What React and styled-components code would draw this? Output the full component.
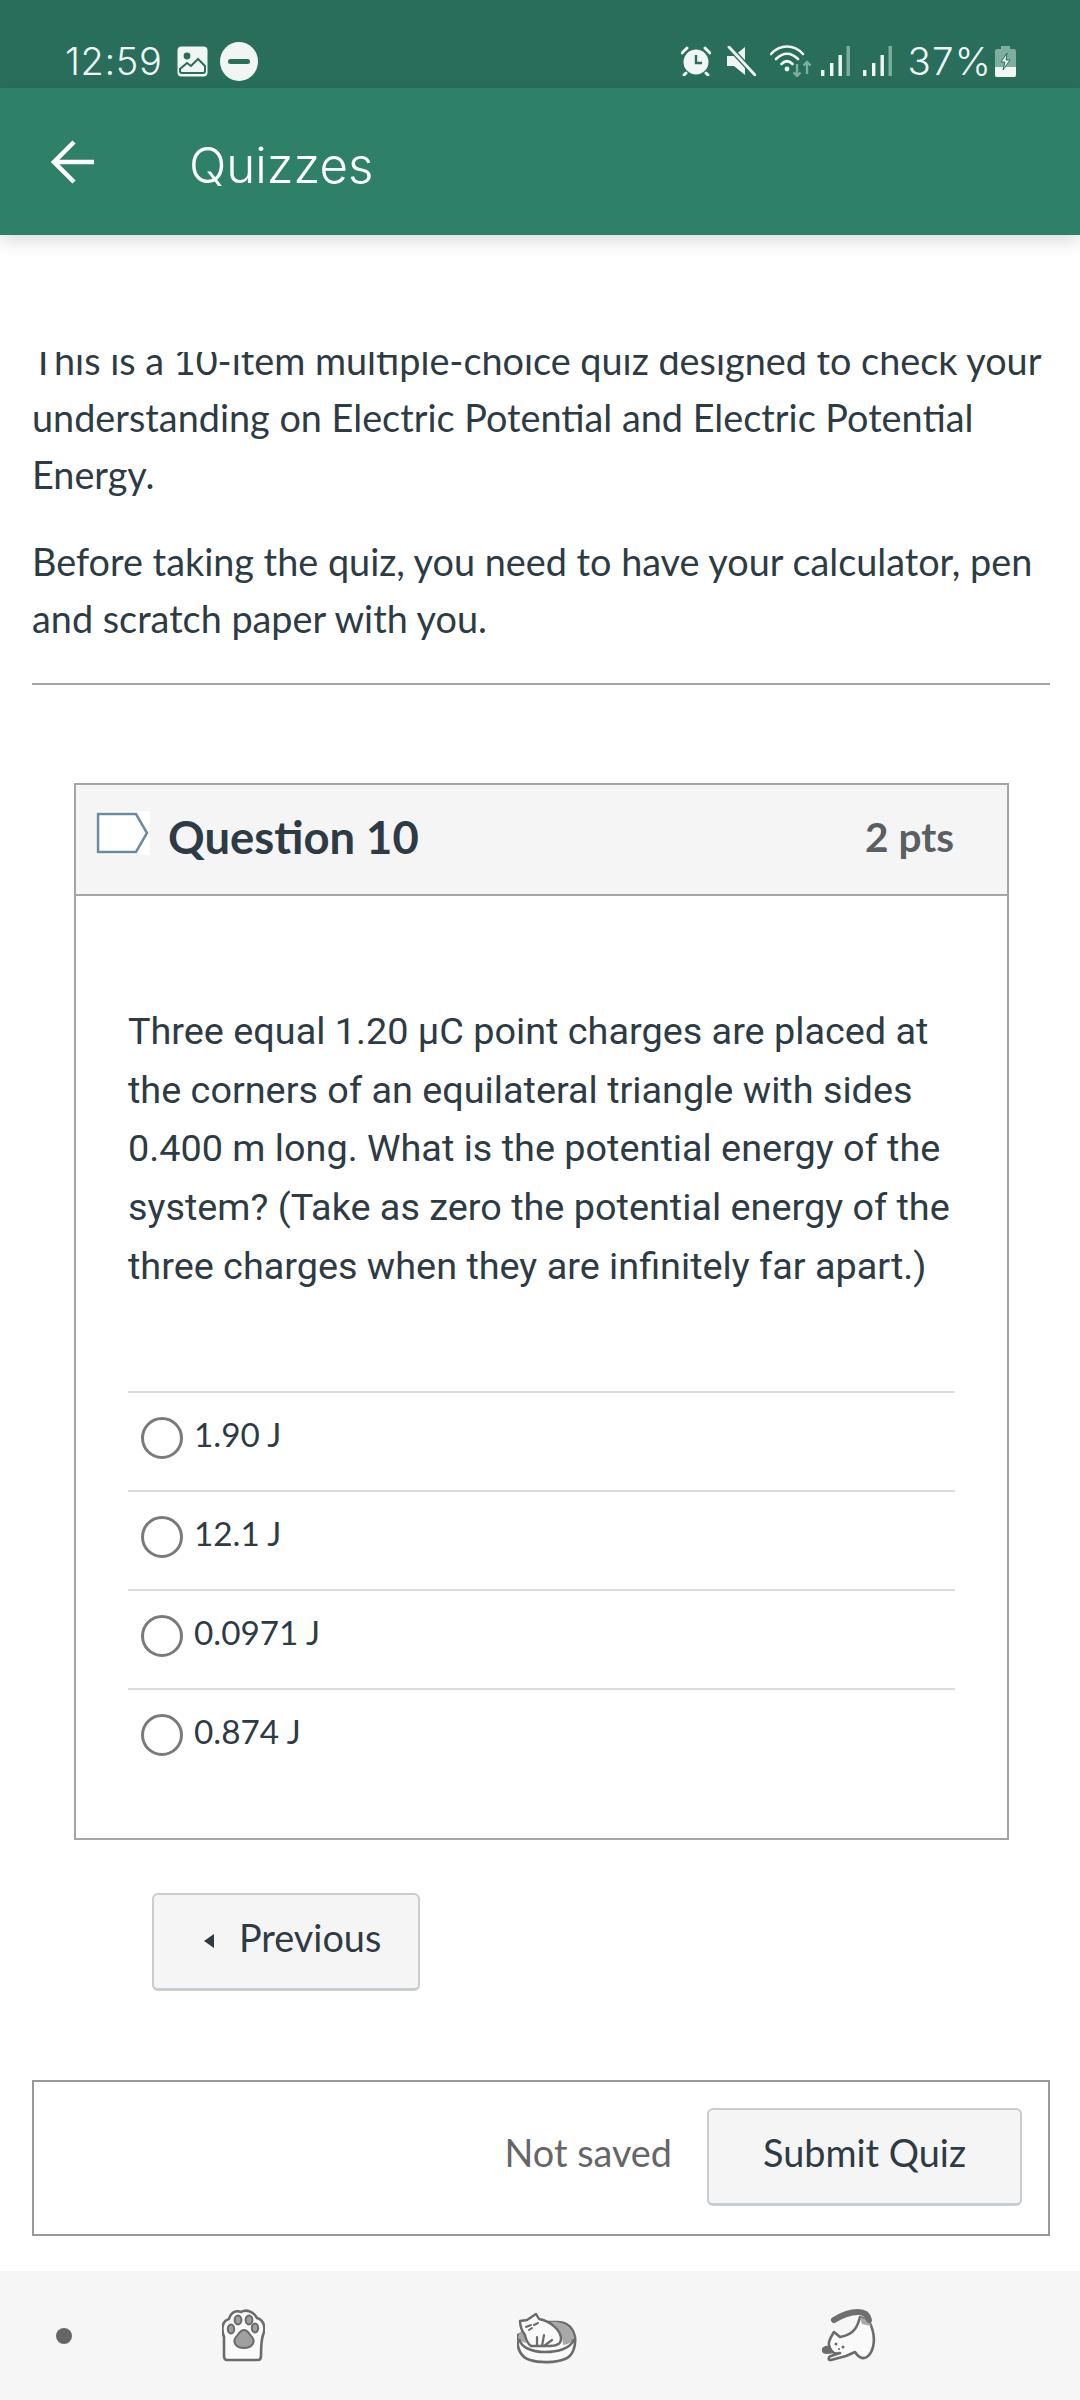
import styled, { createGlobalStyle } from 'styled-components';

const GlobalStyle = createGlobalStyle`
  html, body {
    margin: 0;
    padding: 0;
    background: #fff;
  }
  * {
    box-sizing: border-box;
  }
`;

const Page = styled.div`
  width: 1080px;
  height: 2400px;
  display: flex;
  flex-direction: column;
  overflow: hidden;
  font-family: Lato, "Open Sans", sans-serif;
  color: #2d3b45;
  background: #fff;
`;

const StatusBar = styled.div`
  height: 88px;
  flex: none;
  background: #286e5b;
  color: #f1f6f4;
  display: flex;
  align-items: flex-start;
  justify-content: space-between;
  padding: 40px 64px 0 65px;
  font-family: Inter, Roboto, sans-serif;
`;

const StatusGroup = styled.div`
  display: flex;
  align-items: center;
  height: 42px;
`;

const StatusTime = styled.span`
  font-size: 38px;
  letter-spacing: 0.6px;
  line-height: 42px;
  font-weight: 300;
  margin-right: 15px;
`;

const StatusPercent = styled.span`
  font-size: 38.5px;
  letter-spacing: 1.2px;
  line-height: 42px;
  font-weight: 300;
  margin: 0 3px 0 15px;
`;

const StatusIcon = styled.svg`
  display: block;
  flex: none;
  margin-left: ${props => props.$gap || 0}px;
`;

const AppBar = styled.header`
  height: 147px;
  flex: none;
  background: #2f8069;
  color: #fff;
  display: flex;
  align-items: center;
  padding-left: 51px;
  box-shadow: 0 6px 16px rgba(0, 0, 0, 0.14);
  position: relative;
`;

const AppTitle = styled.h1`
  margin: 0 0 0 94px;
  font-family: Inter, Roboto, sans-serif;
  font-size: 49.2px;
  font-weight: 300;
  line-height: 60px;
  position: relative;
  top: 3px;
`;

const Content = styled.main`
  flex: 1;
  padding: 117px 30px 0 32px;
`;

const IntroClip = styled.div`
  overflow: hidden;
`;

const Intro = styled.div`
  margin-top: -20px;
`;

const IntroText = styled.p`
  margin: 0 0 30px;
  font-size: 37.8px;
  line-height: 57px;
  white-space: nowrap;
`;

const Divider = styled.hr`
  margin: 6px 0 0;
  border: none;
  border-top: 2px solid #a5a5a5;
`;

const Card = styled.section`
  width: 935px;
  margin: 98px 0 0 42px;
  border: 2px solid #a5a5a5;
`;

const CardHeader = styled.div`
  height: 111px;
  background: #f5f5f5;
  border-bottom: 2px solid #a5a5a5;
  display: flex;
  align-items: center;
  justify-content: space-between;
  padding: 0 53px 6px 20px;
`;

const HeaderLeft = styled.div`
  display: flex;
  align-items: center;
  gap: 18px;
`;

const TagIcon = styled.svg`
  display: block;
  position: relative;
  top: -4px;
`;

const QuestionTitle = styled.h2`
  margin: 0;
  font-size: 45.4px;
  font-weight: 700;
  line-height: 52px;
`;

const Points = styled.span`
  font-size: 40.5px;
  font-weight: 700;
  color: #5a5f63;
`;

const CardBody = styled.div`
  padding: 106px 52px 51px 52px;
`;

const QuestionText = styled.p`
  margin: 0 0 95px;
  font-family: Roboto, sans-serif;
  font-size: 37.8px;
  line-height: 58.7px;
  white-space: nowrap;
`;

const Option = styled.label`
  height: 99px;
  border-top: 2px solid #dcdcdc;
  display: flex;
  align-items: center;
  padding: 0 0 6px 13px;
  font-size: 33.3px;
`;

const Radio = styled.span`
  width: 42px;
  height: 42px;
  flex: none;
  border: 3px solid #7a7a7a;
  border-radius: 50%;
  background: #fff;
  margin-right: 11px;
`;

const OptionText = styled.span`
  position: relative;
  top: -4px;
`;

const Button = styled.button`
  height: 98px;
  background: #f5f5f5;
  border: 2px solid #c7cdd1;
  border-bottom-width: 3px;
  border-radius: 6px;
  font-family: inherit;
  font-size: 37.8px;
  color: #2d3b45;
  display: flex;
  align-items: center;
  justify-content: center;
  padding: 0 0 8px;
`;

const PrevButton = styled(Button)`
  width: 268px;
  margin: 53px 0 0 120px;
  justify-content: flex-start;
  padding-left: 50px;
  gap: 25px;
`;

const Caret = styled.span`
  width: 0;
  height: 0;
  margin-top: 8px;
  border-style: solid;
  border-width: 7px 10px 7px 0;
  border-color: transparent #2d3b45 transparent transparent;
`;

const SubmitBar = styled.div`
  height: 156px;
  margin-top: 89px;
  border: 2px solid #999;
  display: flex;
  align-items: center;
  justify-content: flex-end;
  padding: 0 26px 2px 0;
  gap: 35px;
`;

const SaveState = styled.span`
  font-size: 37.8px;
  color: #666;
  position: relative;
  top: -4px;
`;

const SubmitButton = styled(Button)`
  width: 315px;
`;

const BottomNav = styled.nav`
  height: 129px;
  flex: none;
  background: #f6f6f6;
  display: flex;
  align-items: center;
  padding-left: 56px;
`;

const NavDot = styled.span`
  width: 16px;
  height: 16px;
  border-radius: 50%;
  background: #666;
`;

const NavIcon = styled.svg`
  display: block;
  flex: none;
  margin-left: ${props => props.$gap}px;
`;

const options = ['1.90 J', '12.1 J', '0.0971 J', '0.874 J'];

const App = () => {
  return (
    <Page>
      <GlobalStyle />
      <StatusBar>
        <StatusGroup>
          <StatusTime>12:59</StatusTime>
          <StatusIcon width="31" height="31" viewBox="0 0 31 31">
            <rect x="0.5" y="0.5" width="30" height="30" rx="4" fill="#f1f6f4" />
            <circle cx="10" cy="10" r="3.4" fill="#286e5b" />
            <path d="M3 25 L3 23 L10 17 L14 20 L21 13 L28 20 L28 25 Q28 27 26 27 L5 27 Q3 27 3 25 Z" fill="none" stroke="#286e5b" strokeWidth="2" />
          </StatusIcon>
          <StatusIcon $gap={12} width="38" height="39" viewBox="0 0 38 39">
            <ellipse cx="19" cy="19.5" rx="19" ry="19.5" fill="#f1f6f4" />
            <rect x="8" y="17" width="22" height="5" rx="2.5" fill="#286e5b" />
          </StatusIcon>
        </StatusGroup>
        <StatusGroup>
          <StatusIcon width="30" height="30" viewBox="0 0 30 30">
            <circle cx="15" cy="16" r="12.5" fill="#f1f6f4" />
            <path d="M15 9 V17 H21" fill="none" stroke="#286e5b" strokeWidth="2.4" />
            <path d="M1 7 L6 2 M29 7 L24 2 M5 27 L3 29 M25 27 L27 29" stroke="#f1f6f4" strokeWidth="3" strokeLinecap="round" />
          </StatusIcon>
          <StatusIcon $gap={15} width="30" height="30" viewBox="0 0 30 30">
            <path d="M1 10 H8 L19 1 V29 L8 20 H1 Z" fill="#f1f6f4" />
            <path d="M3 1 L29 29" stroke="#286e5b" strokeWidth="5.5" />
            <path d="M3 1 L29 29" stroke="#f1f6f4" strokeWidth="2.8" strokeLinecap="round" />
          </StatusIcon>
          <StatusIcon $gap={14} width="42" height="32" viewBox="0 0 42 32">
            <path d="M1 9 C10 -1 24 -1 33 9 M6 14 C13 7 21 7 28 14 M11.5 19 C15 15.5 19 15.5 22.5 19" fill="none" stroke="#f1f6f4" strokeWidth="2.6" strokeLinecap="round" />
            <circle cx="17" cy="24" r="2.4" fill="#f1f6f4" />
            <path d="M27 19 V31 M23.5 27.5 L27 31 L30.5 27.5 M37 29 V17 M33.5 20.5 L37 17 L40.5 20.5" fill="none" stroke="#7eae9f" strokeWidth="2.4" />
          </StatusIcon>
          <StatusIcon $gap={9} width="29" height="30" viewBox="0 0 29 30">
            <rect x="0" y="24" width="3.4" height="6" fill="#f1f6f4" />
            <rect x="9" y="17" width="3.4" height="13" fill="#f1f6f4" />
            <rect x="17.5" y="9" width="3.4" height="21" fill="#f1f6f4" />
            <rect x="25.5" y="0" width="3.4" height="30" fill="#7eae9f" />
          </StatusIcon>
          <StatusIcon $gap={13} width="29" height="30" viewBox="0 0 29 30">
            <rect x="0" y="24" width="3.4" height="6" fill="#f1f6f4" />
            <rect x="9" y="17" width="3.4" height="13" fill="#f1f6f4" />
            <rect x="17.5" y="9" width="3.4" height="21" fill="#f1f6f4" />
            <rect x="25.5" y="0" width="3.4" height="30" fill="#7eae9f" />
          </StatusIcon>
          <StatusPercent>37%</StatusPercent>
          <StatusIcon width="21" height="31" viewBox="0 0 21 31">
            <path d="M6 0 H15 V3 H19 Q21 3 21 5 V29 Q21 31 19 31 H2 Q0 31 0 29 V5 Q0 3 2 3 H6 Z" fill="#7eae9f" />
            <path d="M0 21 H21 V29 Q21 31 19 31 H2 Q0 31 0 29 Z" fill="#f1f6f4" />
            <path d="M12 7 L6 16 H10 L8 24 L15 14 H11 Z" fill="#f1f6f4" stroke="#286e5b" strokeWidth="1" />
          </StatusIcon>
        </StatusGroup>
      </StatusBar>

      <AppBar>
        <svg width="44" height="44" viewBox="0 0 44 44">
          <path d="M43 22 H4 M23 2 L3 22 L23 42" fill="none" stroke="#fff" strokeWidth="4.5" />
        </svg>
        <AppTitle>Quizzes</AppTitle>
      </AppBar>

      <Content>
        <IntroClip>
          <Intro>
            <IntroText>
              This is a 10-item multiple-choice quiz designed to check your<br />
              understanding on Electric Potential and Electric Potential<br />
              Energy.
            </IntroText>
            <IntroText>
              Before taking the quiz, you need to have your calculator, pen<br />
              and scratch paper with you.
            </IntroText>
          </Intro>
        </IntroClip>
        <Divider />

        <Card>
          <CardHeader>
            <HeaderLeft>
              <TagIcon width="54" height="44" viewBox="0 0 54 44">
                <rect width="54" height="44" fill="#fff" />
                <path d="M2 3 H40 L51 22 L40 41 H2 Z" fill="#fff" stroke="#6a8ba3" strokeWidth="2.5" />
              </TagIcon>
              <QuestionTitle>Question 10</QuestionTitle>
            </HeaderLeft>
            <Points>2 pts</Points>
          </CardHeader>
          <CardBody>
            <QuestionText>
              Three equal 1.20 μC point charges are placed at<br />
              the corners of an equilateral triangle with sides<br />
              0.400 m long. What is the potential energy of the<br />
              system? (Take as zero the potential energy of the<br />
              three charges when they are infinitely far apart.)
            </QuestionText>
            {options.map((option) => (
              <Option key={option}>
                <Radio />
                <OptionText>{option}</OptionText>
              </Option>
            ))}
          </CardBody>
        </Card>

        <PrevButton>
          <Caret />
          Previous
        </PrevButton>

        <SubmitBar>
          <SaveState>Not saved</SaveState>
          <SubmitButton>Submit Quiz</SubmitButton>
        </SubmitBar>
      </Content>

      <BottomNav>
        <NavDot />
        {/* paw */}
        <NavIcon $gap={150} width="43" height="56" viewBox="0 -1 43 56" fill="none">
          <path d="M5 51 Q2 51 2 47 L2 28 C-1 20 0 12 7 10 C9 3 14 1 19 3 C24 0 31 2 35 9 C42 11 44 19 41 26 C39 32 39 38 39 47 Q39 51 36 51 Z" fill="#fafafa" stroke="#6b6b6b" strokeWidth="2.6" strokeLinejoin="round" />
          <ellipse cx="16" cy="11" rx="3.4" ry="4.6" fill="#a0a0a0" stroke="#6b6b6b" strokeWidth="2" />
          <ellipse cx="27" cy="11" rx="3.4" ry="4.6" fill="#a0a0a0" stroke="#6b6b6b" strokeWidth="2" />
          <ellipse cx="9" cy="20" rx="3.2" ry="4.6" fill="#a0a0a0" stroke="#6b6b6b" strokeWidth="2" />
          <ellipse cx="33" cy="19" rx="3.2" ry="4.4" fill="#a0a0a0" stroke="#6b6b6b" strokeWidth="2" />
          <path d="M22 21 C26 21 27 25 30 28 C34 33 30 39 22 39 C14 39 10 33 14 28 C17 25 18 21 22 21 Z" fill="#a0a0a0" stroke="#6b6b6b" strokeWidth="2" />
        </NavIcon>
        {/* cat in a bed */}
        <NavIcon $gap={252} width="60" height="56" viewBox="0 -5 60 56" fill="none">
          <path d="M1 22 C-1 34 3 44 13 47 C22 50 38 50 48 46 C56 43 59 33 58 24 C56 15 50 9 40 9 L30 9 Z" fill="#fafafa" stroke="#6b6b6b" strokeWidth="2.6" />
          <path d="M33 9 C45 7 55 14 57 24 C57 28 53 31 46 32 C46 24 42 14 33 9 Z" fill="#a8a8a8" />
          <path d="M1 24 C2 20 4 17 7 16 L9 30 L3 28 Z" fill="#a8a8a8" />
          <path d="M2 26 C4 34 14 39 28 39 C40 39 54 36 57 26" stroke="#6b6b6b" strokeWidth="2.6" />
          <path d="M3 8 L10 7 L19 1 L22 6 C33 8 44 17 44 26 C44 31 40 33 32 33 L14 33 C11 31 9 27 8 22 C5 18 3 13 3 8 Z" fill="#fafafa" stroke="#6b6b6b" strokeWidth="2.4" strokeLinejoin="round" />
          <path d="M9 14 L14 12 M17 12 L21 10 M12 17 L15 15" stroke="#6b6b6b" strokeWidth="2" strokeLinecap="round" />
          <path d="M20 33 L20 24 M25 33 L27 22 M27 33 L35 27" stroke="#6b6b6b" strokeWidth="2.2" strokeLinecap="round" />
        </NavIcon>
        {/* stretching cat */}
        <NavIcon $gap={245} width="54" height="56" viewBox="0 -1 54 56" fill="none">
          <path d="M12 23 L18 28 C24 27 30 24 33 20 C36 16 37 12 38 8 L47 12 C51 20 53 30 51 38 C49 46 44 50 40 49 C36 48 35 46 33 43 L24 47 L9 51 C6 51 6 48 9 47 L18 44 C12 46 8 42 7 36 C6 32 9 28 12 23 Z" fill="#fafafa" stroke="#6b6b6b" strokeWidth="2.6" strokeLinejoin="round" />
          <path d="M38 8 L47 12 L49 17 L40 15 Z" fill="#a8a8a8" />
          <path d="M12 11 C20 6 28 3 36 3 C42 3 46 6 47 11" stroke="#6f6f6f" strokeWidth="6" strokeLinecap="round" />
          <path d="M7 38 C3 37 0 40 1 42 C2 45 7 44 11 43" fill="#6b6b6b" stroke="#6b6b6b" strokeWidth="2.2" />
          <circle cx="14" cy="35" r="1.5" fill="#6b6b6b" />
          <circle cx="21" cy="38" r="1.5" fill="#6b6b6b" />
          <circle cx="17" cy="40" r="1.1" fill="#6b6b6b" />
        </NavIcon>
      </BottomNav>
    </Page>
  );
};

export default App;
